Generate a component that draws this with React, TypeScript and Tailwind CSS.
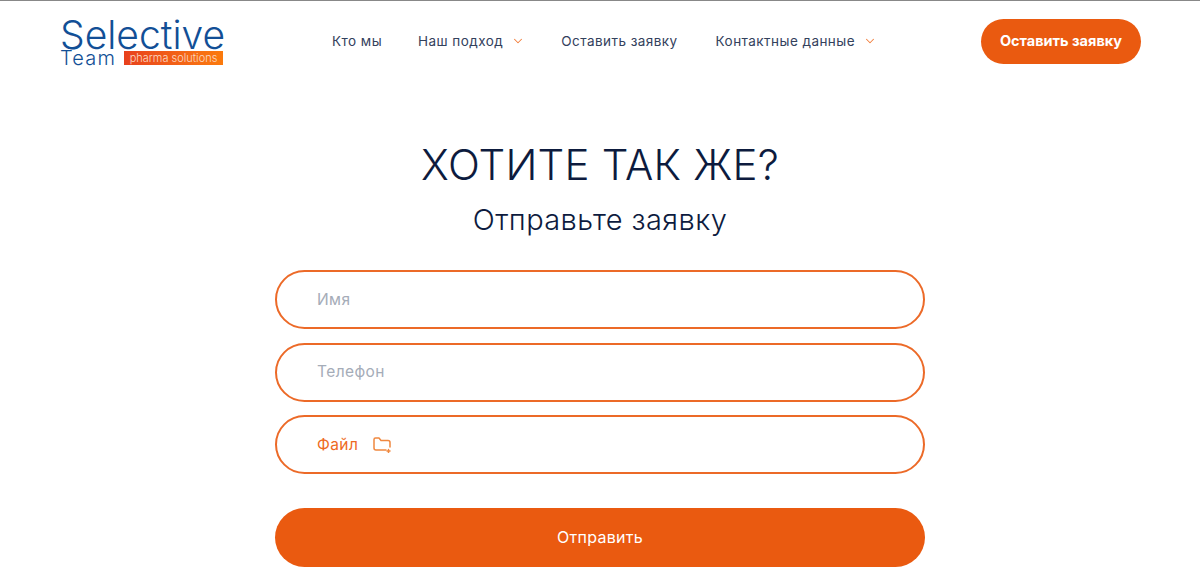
import React from 'react';
import { ChevronDown } from 'lucide-react';

const font = "font-['Inter','Liberation_Sans',sans-serif]";

const Logo = () => (
  <div className="w-[164px] mt-[3px] font-['Inter','Liberation_Sans',sans-serif] text-[#124f96] font-light">
    <div className="text-[39px] leading-[30px] h-[30px] whitespace-nowrap">Selective</div>
    <div className="flex items-center h-[16px]">
      <span className="text-[20px] leading-[16px] w-[64px] tracking-[1.2px]">Team</span>
      <span className="w-[99px] h-[14px] flex items-center justify-center text-[11px] leading-[14px] text-[#fbd9c4] bg-gradient-to-r from-[#e8401c] to-[#fb7a0c] whitespace-nowrap">pharma solutions</span>
    </div>
  </div>
);

const NavItem = ({ label, arrow, className = '' }: { label: string; arrow?: boolean; className?: string }) => (
  <div className={`flex items-center gap-[8px] text-[13.5px] text-[#33415c] tracking-[0.45px] ${className}`}>
    <span>{label}</span>
    {arrow && <ChevronDown size={14} strokeWidth={1.8} className="text-[#f27f3d]" />}
  </div>
);

export default function App() {
  return (
    <div className={`w-[1200px] h-[580px] overflow-hidden bg-white border-t border-[#888888] ${font}`}>
      <header className="flex items-center justify-between h-[80px] pl-[60px] pr-[59px]">
        <Logo />
        <nav className="flex items-center gap-[36px] ml-[4px]">
          <NavItem label="Кто мы" />
          <NavItem label="Наш подход" arrow />
          <NavItem label="Оставить заявку" />
          <NavItem label="Контактные данные" arrow className="ml-[2px]" />
        </nav>
        <button className="w-[160px] h-[45px] rounded-full bg-[#ea5a10] text-white text-[14.5px] font-bold">
          Оставить заявку
        </button>
      </header>

      <main className="flex flex-col items-center pt-[56px]">
        <h1 className="text-[42px] leading-[56px] font-light text-[#0d1b3e] tracking-[0.2px]">ХОТИТЕ ТАК ЖЕ?</h1>
        <h2 className="mt-[9px] text-[29px] leading-[36px] font-light text-[#0d1b3e] tracking-[0.4px]">Отправьте заявку</h2>

        <form className="mt-[32px] w-[650px] flex flex-col gap-[13.5px]">
          <div className="h-[59px] rounded-full border-2 border-[#ec6a28] pl-[40px] flex items-center text-[15.5px] text-[#a5acb8] tracking-[0.4px]">Имя</div>
          <div className="h-[59px] rounded-full border-2 border-[#ec6a28] pl-[40px] flex items-center text-[15.5px] text-[#a5acb8] tracking-[0.4px]">Телефон</div>
          <div className="h-[59px] rounded-full border-2 border-[#ec6a28] pl-[40px] flex items-center gap-[15px] text-[15.5px] text-[#ee6a22] tracking-[0.4px]">
            <span>Файл</span>
            <svg width="20" height="16" viewBox="0 0 20 16" fill="none" stroke="#f0883f" strokeWidth="1.5" strokeLinejoin="round" strokeLinecap="round">
              <path d="M13 13H3a2 2 0 0 1-2-2V2.5A1.5 1.5 0 0 1 2.5 1h3.5l2 2.5h7A2 2 0 0 1 17 5.5V10" />
              <path d="M15.5 12.5v3M14 14h3" />
            </svg>
          </div>
          <button type="button" className="mt-[20px] h-[59px] rounded-full bg-[#ea5a10] text-white text-[16px] tracking-[0.3px]">Отправить</button>
        </form>
      </main>
    </div>
  );
}
